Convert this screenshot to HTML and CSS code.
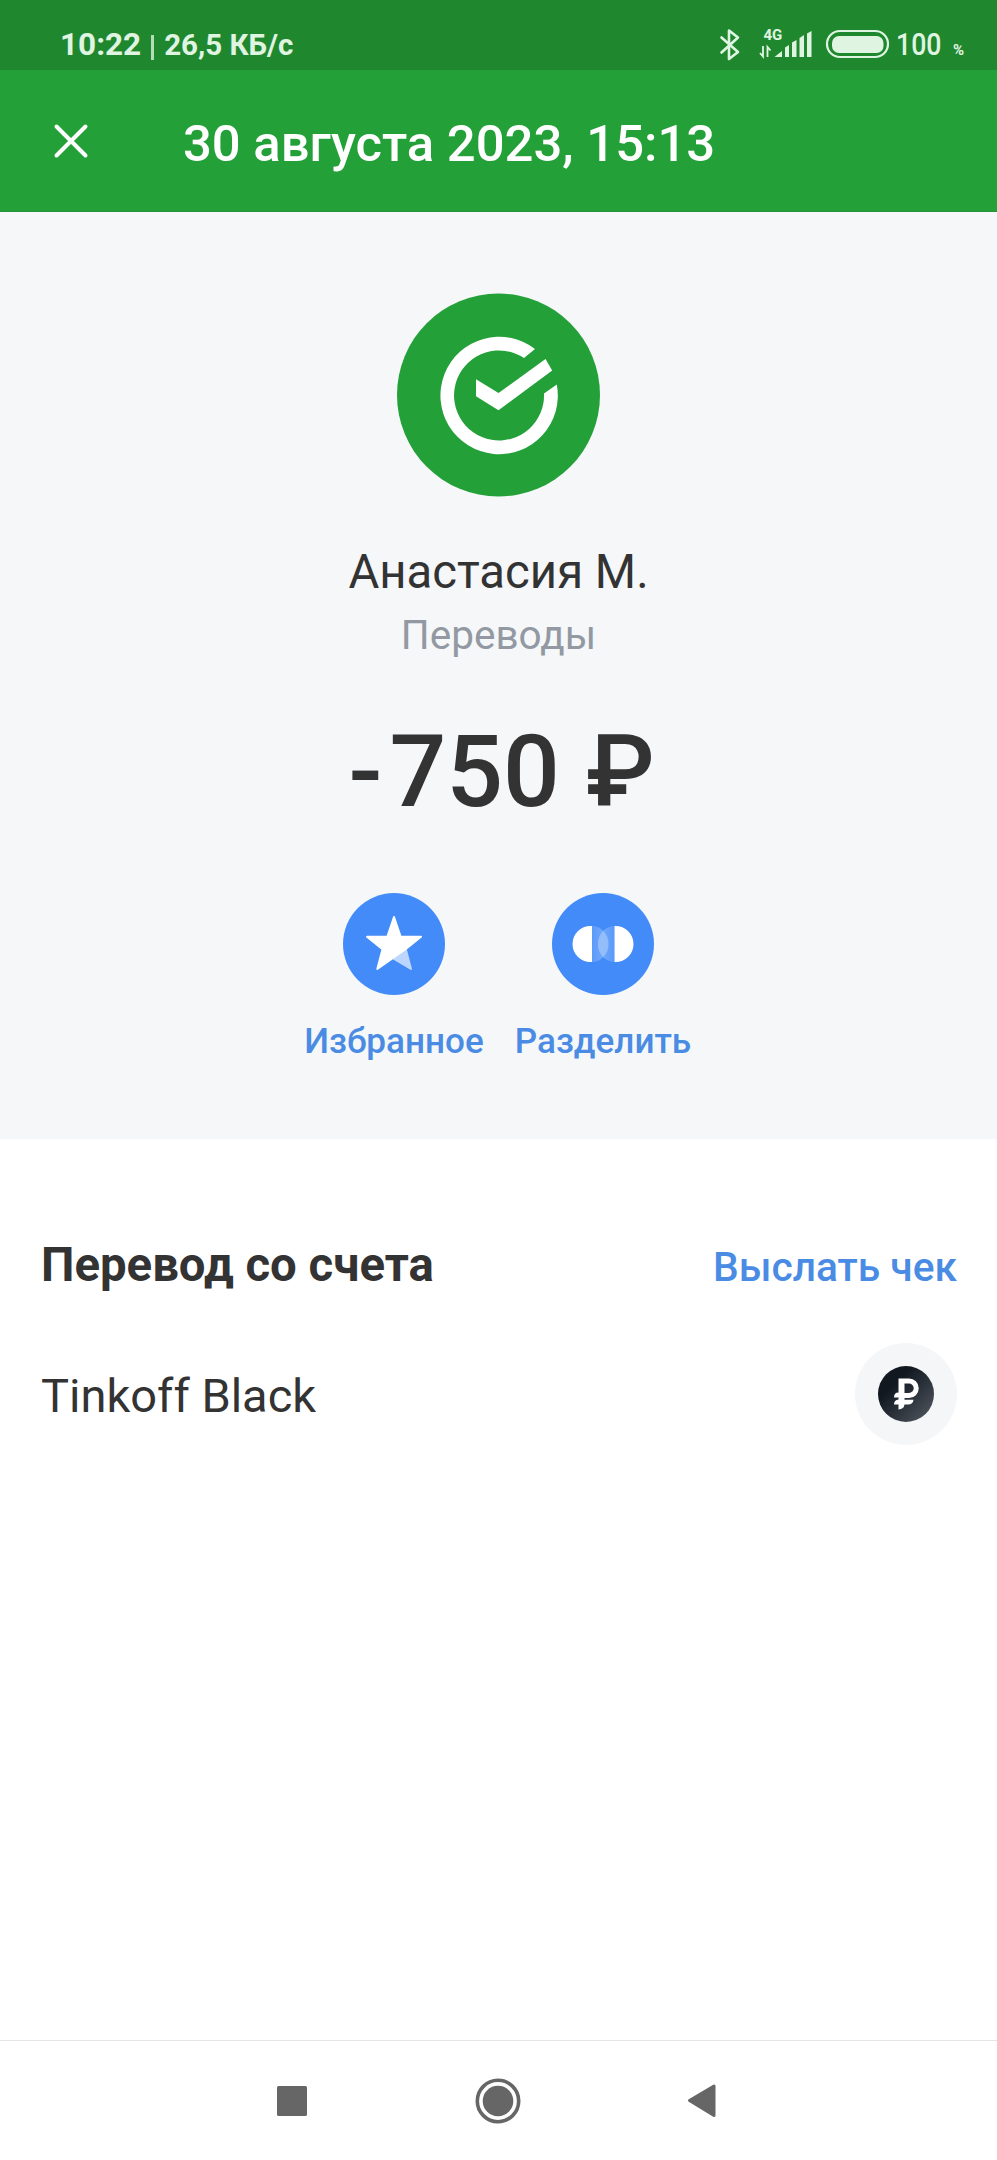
FILE: index.html
```html
<!DOCTYPE html>
<html lang="ru">
<head>
<meta charset="utf-8">
<title>Перевод</title>
<link rel="stylesheet" href="styles.css">
</head>
<body>
<div class="screen">
  <div class="status">
    <span class="clock">10:22</span><span class="sep"></span><span class="speed">26,5 КБ/с</span>
    <svg class="sys" width="176" height="50" viewBox="714 20 176 50" fill="none" stroke="#e0f4e2">
      <path d="M721.500 37.500L738 52L729 59V30.500L738 37.500L721.500 52.500" stroke-width="2.600" stroke-linejoin="round" stroke-linecap="round"/>
      <path d="M763 46V56.500L760 53M767.500 57V47L770.500 50.500" stroke-width="1.800"/>
      <g fill="#e0f4e2" stroke="none">
        <path d="M774.500 57L782 51V57Z"/>
        <path d="M785 47.500L789 45V57H785ZM792 42.500L796.500 40V57H792ZM799.500 38L804 35V57H799.500ZM807 33.500L811.500 31V57H807Z"/>
        <rect x="832" y="36" width="51.500" height="17" rx="7"/>
        <text class="net" x="763.500" y="40">4G</text>
      </g>
      <rect x="827" y="31" width="61" height="26" rx="13" stroke-width="2.200"/>
    </svg>
    <span class="charge">100</span><span class="percent">%</span>
  </div>
  <header class="appbar">
    <svg class="close" width="36" height="36" viewBox="0 0 36 36"><path d="M3.500 3.500L32.500 32.500M32.500 3.500L3.500 32.500" stroke="#fff" stroke-width="4" stroke-linecap="round"/></svg>
    <span class="title">30 августа 2023, 15:13</span>
  </header>
  <section class="hero">
    <svg class="avatar" width="205" height="204" viewBox="-102.500 -102 205 204">
      <circle r="101.500" fill="#23a038"/>
      <path d="M36.500 -46A58.700 58.700 0 1 0 58.300 -10.500L45.500 -1.500A45 45 0 1 1 25.500 -37Z" fill="#fff"/>
      <path d="M-22.500 -15.700L0 -2L47 -36L53.700 -24.500L0 15.300L-22.500 1.300Z" fill="#fff"/>
    </svg>
    <div class="name">Анастасия М.</div>
    <div class="category">Переводы</div>
    <div class="amount"><span>-</span><span class="value">750</span><span class="rub">₽</span></div>
    <div class="actions">
      <div class="action">
        <svg width="102" height="102" viewBox="-51 -51 102 102">
          <circle r="51" fill="#428bf9"/>
          <path d="M0 15L12 6L17 25Z" fill="#bcd6fd" stroke="#bcd6fd" stroke-width="2" stroke-linejoin="round"/>
          <path d="M0 -27L6.700 -7.200H27L11.200 5.500L-16.700 25L-11.500 5.200L-27 -7.200H-6.700Z" fill="#fff" stroke="#fff" stroke-width="2" stroke-linejoin="round"/>
        </svg>
        <span>Избранное</span>
      </div>
      <div class="action">
        <svg width="102" height="102" viewBox="-51 -51 102 102">
          <defs>
            <linearGradient id="fadeIn"><stop offset="0" stop-color="#fff" stop-opacity=".14"/><stop offset="1" stop-color="#fff" stop-opacity=".3"/></linearGradient>
            <linearGradient id="fadeOut"><stop offset="0" stop-color="#fff" stop-opacity=".3"/><stop offset="1" stop-color="#fff" stop-opacity=".12"/></linearGradient>
          </defs>
          <circle r="51" fill="#428bf9"/>
          <path d="M-11 -18A16.500 18 0 0 1 -11 18Z" fill="url(#fadeIn)"/>
          <path d="M11.500 -18A16.500 18 0 0 0 11.500 18Z" fill="url(#fadeOut)"/>
          <path d="M-11 -18H-12.500A18 18 0 0 0 -12.500 18H-11ZM11.500 -18H12.500A18 18 0 0 1 12.500 18H11.500Z" fill="#fff"/>
        </svg>
        <span>Разделить</span>
      </div>
    </div>
  </section>
  <main class="details">
    <div class="head"><h2>Перевод со счета</h2><span class="receipt">Выслать чек</span></div>
    <div class="account">
      <span class="account-name">Tinkoff Black</span>
      <svg width="102" height="102" viewBox="-51 -51 102 102">
        <defs><linearGradient id="coin" x1="0" y1="0" x2="1" y2="1"><stop offset=".3" stop-color="#111820"/><stop offset="1" stop-color="#555a63"/></linearGradient></defs>
        <circle r="51" fill="#f5f6f8"/>
        <circle r="28" fill="url(#coin)"/>
        <path d="M-7.500 -15.500H3A9.700 9.700 0 0 1 3 4H-1.500V5.700H7.500Q7 10.500 2 10.500H-1.500Q-2 15 -7.500 15.500V10.500H-12Q-12 6 -7.500 5.500V3.500H-12Q-12 -1.500 -7.500 -1.500ZM-1.500 -10.500V-1H3A4.700 4.700 0 0 0 3 -10.500Z" fill="#fff" fill-rule="evenodd"/>
      </svg>
    </div>
  </main>
  <nav class="navbar">
    <svg width="30" height="30"><rect width="30" height="30" rx="1.500" fill="#666"/></svg>
    <svg class="home" width="46" height="46" viewBox="-23 -23 46 46"><circle r="20.700" fill="none" stroke="#666" stroke-width="3.600"/><circle r="15.300" fill="#666"/></svg>
    <svg width="30" height="36"><path d="M2.500 17.500L27 3V32.500Z" fill="#666" stroke="#666" stroke-width="3" stroke-linejoin="round"/></svg>
  </nav>
</div>
</body>
</html>
```
FILE: styles.css
```css
* { box-sizing: border-box; }
body { margin: 0; font-family: Roboto, sans-serif; color: #333; background: #fff; }
svg { display: block; flex: none; }
.screen { width: 997px; height: 2160px; display: flex; flex-direction: column; overflow: hidden; }

.status { height: 70px; flex: none; background: #1f882f; color: #e0f4e2; display: flex; align-items: baseline; padding: 20px 33px 0 60px; line-height: 50px; white-space: nowrap; }
.clock { font-size: 31.5px; font-weight: 700; }
.sep { width: 3px; height: 25px; margin: 0 10px; background: #b4dcb9; align-self: flex-start; margin-top: 15px; }
.speed { font-size: 29.5px; font-weight: 700; }
.sys { margin-left: auto; align-self: flex-start; }
.net { font: 700 15px Roboto, sans-serif; }
.charge { font-size: 31px; font-weight: 500; margin-left: 6px; width: 57px; transform: scaleX(.86); transform-origin: left; }
.percent { font-size: 15px; font-weight: 700; }

.appbar { height: 142px; flex: none; background: #23a038; border-bottom: 1px solid #2a8f3c; display: flex; align-items: center; padding-left: 53px; color: #fff; }
.title { margin: 5px 0 0 94px; font-size: 50.8px; font-weight: 500; white-space: nowrap; }

.hero { height: 927px; flex: none; background: #f5f7f9; padding-top: 81px; display: flex; flex-direction: column; align-items: center; }
.name { margin-top: 45px; font-size: 47.3px; line-height: 60px; }
.category { margin-top: 3px; font-size: 40.5px; line-height: 60px; color: #9299a2; }
.amount { margin-top: 47px; padding-left: 6px; font-size: 100px; line-height: 120px; font-weight: 500; display: flex; }
.value { margin-left: 7px; }
.rub { margin-left: 26px; }
.actions { margin-top: 61px; display: flex; gap: 1px; }
.action { width: 208px; display: flex; flex-direction: column; align-items: center; gap: 26px; font-size: 35.1px; line-height: 40px; font-weight: 500; color: #4a8be4; }

.details { flex: 1; padding: 96px 40px 0 41px; }
.head { display: flex; justify-content: space-between; align-items: baseline; line-height: 60px; }
.head h2 { margin: 0; font-size: 47.3px; font-weight: 700; }
.receipt { font-size: 40.7px; font-weight: 500; color: #4a8be4; }
.account { margin-top: 46px; display: flex; justify-content: space-between; align-items: center; }
.account-name { font-size: 47px; padding-top: 3px; }

.navbar { height: 120px; flex: none; border-top: 1px solid #e4e4e4; display: flex; align-items: center; justify-content: space-between; padding: 0 280px 0 277px; }
.home { margin-left: 2px; }
```
